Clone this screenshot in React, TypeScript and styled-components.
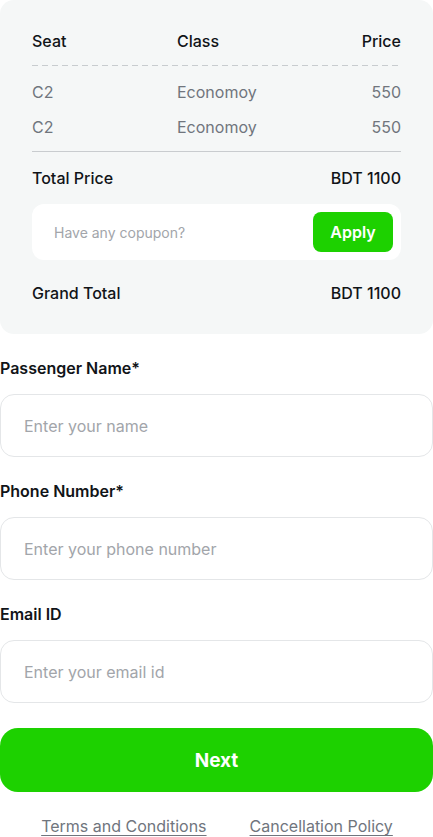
import React from "react";
import styled, { createGlobalStyle } from "styled-components";

const Global = createGlobalStyle`
  html, body { margin: 0; padding: 0; background: #ffffff; }
  body { font-family: Inter, "Noto Sans", sans-serif; -webkit-font-smoothing: antialiased; }
  * { box-sizing: border-box; }
`;

const Page = styled.div`
  width: 433px;
  display: flex;
  flex-direction: column;
`;

const Card = styled.section`
  background: #f5f7f7;
  border-radius: 14px;
  padding: 29px 32px 29px 32px;
  display: flex;
  flex-direction: column;
`;

const Row = styled.div<{ $muted?: boolean; $head?: boolean }>`
  display: grid;
  grid-template-columns: 145px 1fr auto;
  font-size: 16px;
  line-height: 24px;
  color: ${(p) => (p.$muted ? "#70757d" : "#111418")};
  font-weight: ${(p) => (p.$head ? 500 : 400)};
`;

const Right = styled.span`
  text-align: right;
`;

const Dashed = styled.div`
  height: 1px;
  margin: 12px 0 14px;
  background-image: linear-gradient(to right, #c8cccf 0 6px, transparent 6px 10px);
  background-size: 10px 1px;
  background-repeat: repeat-x;
`;

const Rows = styled.div`
  display: flex;
  flex-direction: column;
  gap: 11px;
`;

const Solid = styled.div`
  height: 1px;
  background: #c9cccf;
  margin: 12px 0 14px;
`;

const TotalRow = styled.div`
  display: flex;
  justify-content: space-between;
  font-size: 16px;
  line-height: 24px;
  font-weight: 500;
  color: #111418;
`;

const Coupon = styled.div`
  background: #ffffff;
  border-radius: 12px;
  height: 56px;
  margin: 14px 0 21px;
  display: flex;
  align-items: center;
  justify-content: space-between;
  padding: 0 8px 0 22px;
`;

const CouponText = styled.span`
  font-size: 14px;
  color: #a2a5aa;
`;

const SmallButton = styled.button`
  border: none;
  background: #1dd100;
  color: #ffffff;
  font-family: inherit;
  font-weight: 600;
  font-size: 16px;
  width: 80px;
  height: 40px;
  border-radius: 8px;
`;

const Form = styled.div`
  display: flex;
  flex-direction: column;
  padding-top: 22px;
`;

const Label = styled.label`
  font-size: 16px;
  line-height: 24px;
  font-weight: 600;
  color: #111418;
  margin-bottom: 14px;
`;

const Field = styled.div`
  height: 63px;
  border: 1px solid #e4e6e8;
  border-radius: 14px;
  display: flex;
  align-items: center;
  padding: 0 23px;
  font-size: 16px;
  color: #a2a5aa;
  margin-bottom: 22px;
`;

const NextButton = styled.button`
  margin-top: 3px;
  height: 64px;
  border: none;
  border-radius: 18px;
  background: #1dd100;
  color: #ffffff;
  font-family: inherit;
  font-weight: 700;
  font-size: 19px;
`;

const Footer = styled.div`
  display: flex;
  justify-content: center;
  gap: 43px;
  margin-top: 22px;
  padding-left: 1px;
`;

const Link = styled.a`
  font-size: 16px;
  line-height: 24px;
  color: #70757d;
  text-decoration: underline;
  text-underline-offset: 3px;
  text-decoration-thickness: 1px;
`;

const items = [
  { seat: "C2", cls: "Economoy", price: "550" },
  { seat: "C2", cls: "Economoy", price: "550" },
];

const fields = [
  { label: "Passenger Name*", ph: "Enter your name" },
  { label: "Phone Number*", ph: "Enter your phone number" },
  { label: "Email ID", ph: "Enter your email id" },
];

export default function App() {
  return (
    <Page>
      <Global />
      <Card>
        <Row $head>
          <span>Seat</span>
          <span>Class</span>
          <Right>Price</Right>
        </Row>
        <Dashed />
        <Rows>
          {items.map((it, i) => (
            <Row $muted key={i}>
              <span>{it.seat}</span>
              <span>{it.cls}</span>
              <Right>{it.price}</Right>
            </Row>
          ))}
        </Rows>
        <Solid />
        <TotalRow>
          <span>Total Price</span>
          <span>BDT 1100</span>
        </TotalRow>
        <Coupon>
          <CouponText>Have any copupon?</CouponText>
          <SmallButton>Apply</SmallButton>
        </Coupon>
        <TotalRow>
          <span>Grand Total</span>
          <span>BDT 1100</span>
        </TotalRow>
      </Card>
      <Form>
        {fields.map((f) => (
          <React.Fragment key={f.label}>
            <Label>{f.label}</Label>
            <Field>{f.ph}</Field>
          </React.Fragment>
        ))}
        <NextButton>Next</NextButton>
        <Footer>
          <Link>Terms and Conditions</Link>
          <Link>Cancellation Policy</Link>
        </Footer>
      </Form>
    </Page>
  );
}
